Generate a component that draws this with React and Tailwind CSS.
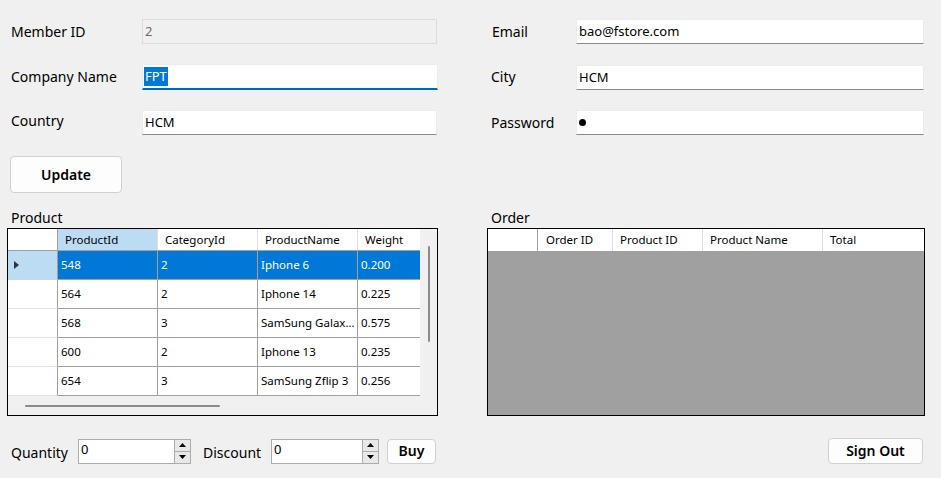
import React from "react";

const F = { fontFamily: '"Noto Sans", "Open Sans", sans-serif' };

function TextBox({ value, focused, disabled, selected, password, width }) {
  let cls =
    "h-[25px] flex items-center pl-[1px] text-[13px] leading-none whitespace-nowrap ";
  if (disabled) cls += "bg-[#f0f0f0] border border-[#dcdcdc] text-[#6d6d6d]";
  else if (focused)
    cls += "bg-white border border-[#ececec] border-b-2 border-b-[#0067c0] h-[26px]";
  else cls += "bg-white border border-[#ececec] border-b-[#8a8a8a]";
  return (
    <div className={cls} style={{ width }}>
      {selected ? (
        <span className="bg-[#0078d7] text-white px-[1px] h-[19px] flex items-center">{value}</span>
      ) : password ? (
        <span className="w-[7px] h-[7px] rounded-full bg-black ml-[1px]" />
      ) : (
        <span className="px-[1px]">{value}</span>
      )}
    </div>
  );
}

function Label({ children, className = "" }) {
  return <div className={"text-[14px] text-black leading-none whitespace-nowrap " + className}>{children}</div>;
}

function Spin() {
  return (
    <div className="flex flex-col h-[23px] w-[16px] border-l border-[#acacac] bg-[#f0f0f0]">
      <div className="flex-1 border-b border-[#acacac] flex items-center justify-center bg-[#e8e8e8]">
        <svg width="7" height="4" viewBox="0 0 7 4"><path d="M3.5 0 L7 4 L0 4 Z" fill="#000" /></svg>
      </div>
      <div className="flex-1 flex items-center justify-center bg-[#e8e8e8]">
        <svg width="7" height="4" viewBox="0 0 7 4"><path d="M0 0 L7 0 L3.5 4 Z" fill="#000" /></svg>
      </div>
    </div>
  );
}

function NumBox({ width }) {
  return (
    <div
      className="h-[25px] bg-white border border-[#acacac] flex items-start justify-between"
      style={{ width }}
    >
      <span className="text-[13px] leading-none pl-[2px] pt-[3px]">0</span>
      <Spin />
    </div>
  );
}

const products = [
  ["548", "2", "Iphone 6", "0.200"],
  ["564", "2", "Iphone 14", "0.225"],
  ["568", "3", "SamSung Galax...", "0.575"],
  ["600", "2", "Iphone 13", "0.235"],
  ["654", "3", "SamSung Zflip 3", "0.256"],
];

function ProductGrid() {
  return (
    <div className="w-[431px] h-[188px] border border-black bg-[#f0f0f0] flex text-[11.5px] leading-none whitespace-nowrap">
      <div className="w-[412px] flex flex-col">
        <div className="flex h-[22px] border-b border-[#a0a0a0] bg-white">
          <div className="w-[50px] border-r border-[#a0a0a0]" />
          <div className="w-[100px] bg-[#bcdcf4] border-r border-[#e0e0e0] flex items-center pl-[7px]">ProductId</div>
          <div className="w-[100px] border-r border-[#e0e0e0] flex items-center pl-[7px]">CategoryId</div>
          <div className="w-[100px] border-r border-[#e0e0e0] flex items-center pl-[7px]">ProductName</div>
          <div className="w-[62px] flex items-center pl-[7px]">Weight</div>
        </div>
        {products.map((r, i) => {
          const sel = i === 0;
          return (
            <div key={i} className="flex h-[29px]">
              <div
                className={
                  "w-[50px] border-r border-[#a0a0a0] border-b flex items-center pl-[6px] " +
                  (sel ? "bg-[#bcdcf4] border-b-[#bcdcf4]" : "bg-white border-b-[#e3e3e3]")
                }
              >
                {sel && (
                  <svg width="5" height="8" viewBox="0 0 5 8">
                    <path d="M0 0 L5 4 L0 8 Z" fill="#333" />
                  </svg>
                )}
              </div>
              {r.map((c, j) => (
                <div
                  key={j}
                  className={
                    (j === 3 ? "w-[62px] " : "w-[100px] border-r border-[#a0a0a0] ") +
                    "border-b border-b-[#a0a0a0] flex items-center pl-[3px] overflow-hidden " +
                    (sel ? "bg-[#0078d7] text-white" : "bg-white text-black")
                  }
                >
                  {c}
                </div>
              ))}
            </div>
          );
        })}
        <div className="flex-1 flex items-center pl-[17px]">
          <div className="w-[195px] h-[2px] rounded-full bg-[#8a8a8a]" />
        </div>
      </div>
      <div className="flex-1 flex justify-center pt-[17px]">
        <div className="w-[2px] h-[96px] rounded-full bg-[#8a8a8a]" />
      </div>
    </div>
  );
}

function OrderGrid() {
  return (
    <div className="w-[438px] h-[188px] border border-black bg-[#a0a0a0] flex flex-col text-[11.5px] leading-none whitespace-nowrap">
      <div className="flex h-[22px] bg-white">
        <div className="w-[50px] border-r border-[#a0a0a0]" />
        <div className="w-[75px] border-r border-[#e0e0e0] flex items-center pl-[8px]">Order ID</div>
        <div className="w-[90px] border-r border-[#e0e0e0] flex items-center pl-[7px]">Product ID</div>
        <div className="w-[120px] border-r border-[#e0e0e0] flex items-center pl-[7px]">Product Name</div>
        <div className="flex-1 flex items-center pl-[7px]">Total</div>
      </div>
    </div>
  );
}

function Btn({ children, w, h }) {
  return (
    <div
      className="bg-[#fdfdfd] border border-[#d0d0d0] rounded-[4px] flex items-center justify-center text-[14px] font-semibold leading-none text-black"
      style={{ width: w, height: h }}
    >
      {children}
    </div>
  );
}

export default function App() {
  return (
    <div className="w-[941px] h-[478px] bg-[#f0f0f0] text-black overflow-hidden" style={F}>
      {/* Top form */}
      <div className="flex pt-[19px]">
        <div className="w-[487px] pl-[11px]">
          <div className="flex items-center h-[25px]">
            <Label className="w-[131px]">Member ID</Label>
            <TextBox value="2" disabled width={295} />
          </div>
          <div className="flex items-center h-[26px] mt-[20px]">
            <Label className="w-[131px]">Company Name</Label>
            <TextBox value="FPT" focused selected width={296} />
          </div>
          <div className="flex items-center h-[25px] mt-[20px]">
            <Label className="w-[131px] -mt-[4px]">Country</Label>
            <TextBox value="HCM" width={295} />
          </div>
        </div>
        <div className="pl-[4px]">
          <div className="flex items-center h-[25px]">
            <Label className="w-[85px] pl-[1px]">Email</Label>
            <TextBox value="bao@fstore.com" width={348} />
          </div>
          <div className="flex items-center h-[26px] mt-[20px]">
            <Label className="w-[85px]">City</Label>
            <TextBox value="HCM" width={348} />
          </div>
          <div className="flex items-center h-[25px] mt-[20px]">
            <Label className="w-[85px]">Password</Label>
            <TextBox password width={348} />
          </div>
        </div>
      </div>

      <div className="pl-[10px] mt-[21px]">
        <Btn w={112} h={37}>Update</Btn>
      </div>

      {/* Grids */}
      <div className="flex mt-[18px]">
        <div className="pl-[7px] w-[487px]">
          <Label className="pl-[4px] h-[12px]">Product</Label>
          <div className="mt-[5px]">
            <ProductGrid />
          </div>
        </div>
        <div>
          <Label className="pl-[4px] h-[12px]">Order</Label>
          <div className="mt-[5px]">
            <OrderGrid />
          </div>
        </div>
      </div>

      {/* Bottom row */}
      <div className="flex items-center mt-[22px] h-[26px]">
        <Label className="pl-[11px] w-[78px] mt-[3px]">Quantity</Label>
        <NumBox width={113} />
        <Label className="pl-[12px] w-[80px] mt-[3px]">Discount</Label>
        <NumBox width={108} />
        <div className="ml-[8px]">
          <Btn w={49} h={25}>Buy</Btn>
        </div>
        <div className="ml-auto mr-[18px]">
          <Btn w={95} h={26}>Sign Out</Btn>
        </div>
      </div>
    </div>
  );
}
